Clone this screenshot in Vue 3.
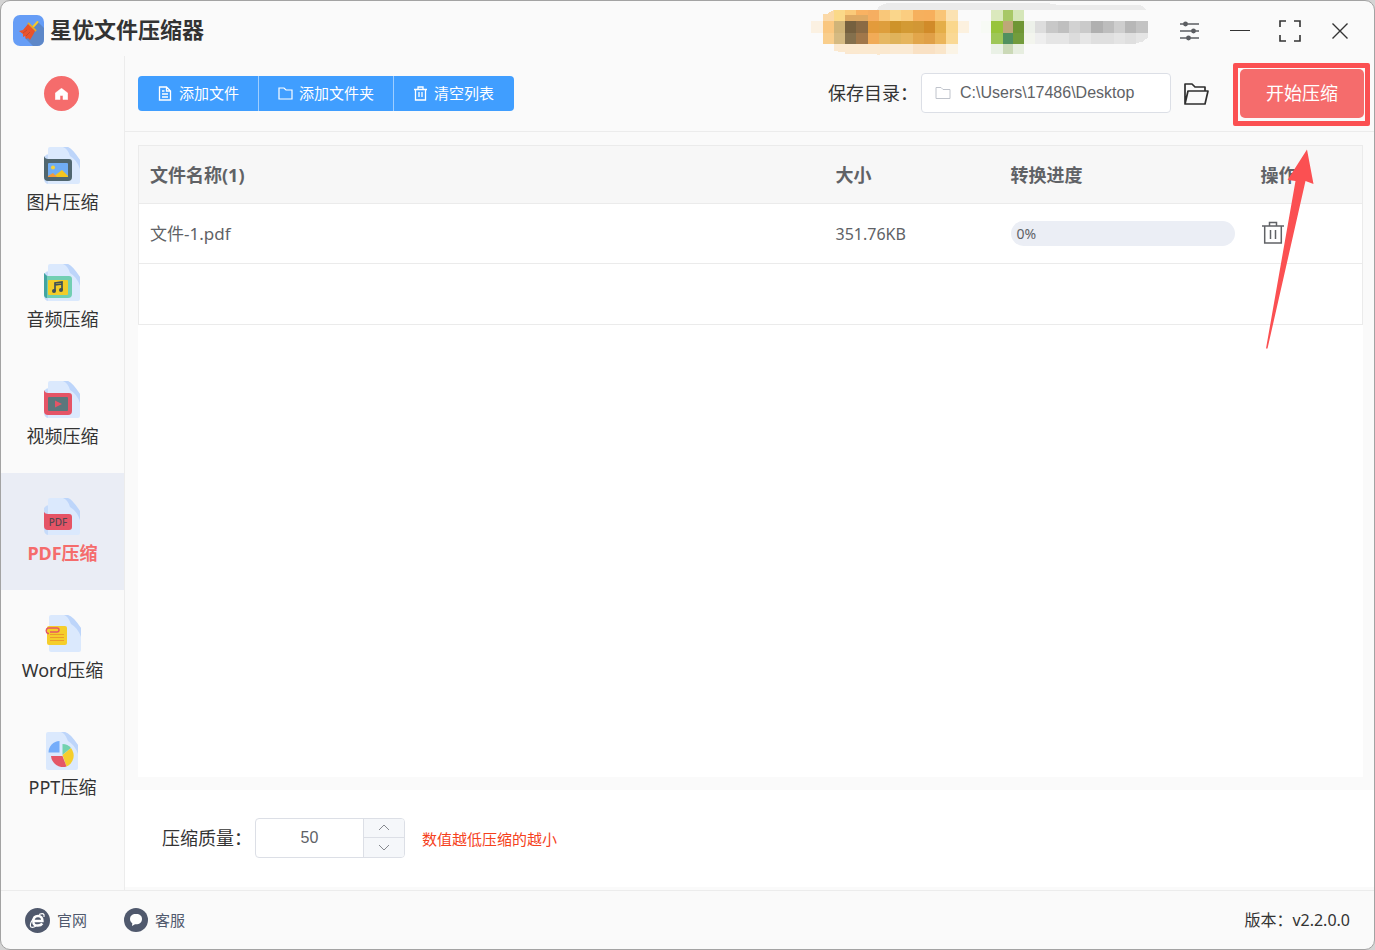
<script setup>
import { ref } from 'vue'

const items = [
  { id: 'image', label: '图片压缩' },
  { id: 'audio', label: '音频压缩' },
  { id: 'video', label: '视频压缩' },
  { id: 'pdf', label: 'PDF压缩' },
  { id: 'word', label: 'Word压缩' },
  { id: 'ppt', label: 'PPT压缩' },
]
const active = ref('pdf')
const path = ref('C:\\Users\\17486\\Desktop')
const quality = ref(50)
const files = ref([{ name: '文件-1.pdf', size: '351.76KB', progress: 0 }])

function step(n) {
  quality.value = Math.min(100, Math.max(1, Number(quality.value) + n))
}

// Rows of colour blocks: y, height, then [x, width, colour]
const blocks = [
  [30, 33, [[102, 33, '#fbd989'], [135, 34, '#fbca79'], [169, 34, '#f9b262'], [203, 34, '#f6ae61'], [237, 34, '#f9c779'], [271, 33, '#fad68b'], [304, 35, '#fbcd80'], [339, 33, '#f6b05d'], [372, 33, '#f7af5c'], [405, 33, '#f9c576'], [438, 36, '#fbe2b2'], [573, 36, '#dbe9bd'], [609, 30, '#a8c866'], [639, 33, '#d5e6b8']]],
  [63, 36, [[33, 36, '#fbf1e2'], [69, 33, '#fac77f'], [102, 33, '#d0b478'], [135, 34, '#75603f'], [169, 35, '#8a6a44'], [204, 33, '#e39b3b'], [237, 34, '#de9e3c'], [271, 33, '#ce932a'], [304, 35, '#d39a34'], [339, 33, '#d29735'], [372, 33, '#d18b29'], [405, 33, '#e4ae48'], [438, 36, '#fad78c'], [474, 33, '#fcf1df'], [543, 30, '#f7faf5'], [573, 36, '#98c43c'], [609, 30, '#bea778'], [639, 33, '#6f9634'], [672, 33, '#edf1ea'], [705, 33, '#dddddd'], [738, 36, '#c8c8c8'], [774, 33, '#bfbfbf'], [807, 33, '#d2d2d2'], [840, 33, '#cacaca'], [873, 36, '#b0b0b0'], [909, 33, '#bdbdbd'], [942, 33, '#cecece'], [975, 33, '#b7b7b7'], [1008, 36, '#c3c3c3']]],
  [99, 33, [[69, 33, '#f9ce8c'], [102, 33, '#d5ba82'], [135, 34, '#84704d'], [169, 35, '#a1774a'], [204, 33, '#f1ab57'], [237, 34, '#e6b762'], [271, 33, '#dfb35b'], [304, 35, '#e6b55d'], [339, 33, '#e2a64b'], [372, 33, '#e0a047'], [405, 33, '#ebb55a'], [438, 36, '#fad995'], [573, 36, '#9ec757'], [609, 30, '#51905f'], [639, 33, '#739c3c'], [672, 33, '#f3f5ee'], [705, 33, '#eeeeee'], [738, 69, '#e5e5e5'], [807, 33, '#dcdcdc'], [840, 33, '#e6e6e6'], [873, 69, '#dfdfdf'], [942, 33, '#e4e4e4'], [975, 33, '#dfdfdf']]],
  [132, 30, [[135, 69, '#fbe7cf'], [204, 67, '#fae8cf'], [271, 68, '#faead4'], [339, 66, '#f9e1c4'], [405, 33, '#fae6ca'], [438, 36, '#fbf4e6'], [573, 36, '#eaf1e6'], [609, 30, '#cbd9b7'], [639, 33, '#e7eee0']]],
]
</script>

<template>
  <div class="window">
    <header class="titlebar">
      <svg class="logo" viewBox="0 0 31 31" aria-hidden="true">
        <rect width="31" height="31" rx="7" fill="#669df6" />
        <path d="M25 7 31 13V24Q31 31 24 31H20L12 23Z" fill="#5d87c8" />
        <path d="m19 13 5.500-6" stroke="#f7c928" stroke-width="2" stroke-linecap="round" />
        <path d="m15 8 8 8" stroke="#e6aa2a" stroke-width="2" />
        <path d="m15 9 7 7-2 4-3 5-2-2-2 1-1-3-2 1v-3l-4-3 4-1Z" fill="#e9532b" />
        <path d="m10 18 4-3m-1 6 4-4" stroke="#bf4931" />
      </svg>
      <h1>星优文件压缩器</h1>
      <svg class="account" viewBox="0 0 1080 180" shape-rendering="crispEdges" aria-hidden="true">
        <path d="M230 30Q240 10 270 9H740L770 14H1015Q1032 18 1038 30Z" fill="#ebebeb" />
        <path d="M69 42H83Q92 31 108 30V63H69Z" fill="#fbd9a8" />
        <g v-for="row in blocks" :key="row[0]">
          <rect v-for="c in row[2]" :key="c[0]" :x="c[0]" :y="row[0]" :width="c[1]" :height="row[1]" :fill="c[2]" />
        </g>
        <path d="M135 45H203V63H135Z" fill="#dfaa63" />
        <path d="M1008 99H1044V112L1028 125 1008 130Z" fill="#e5e5e5" />
        <path d="M102 132H240V164L150 159 102 153Z" fill="#fbe9d0" />
      </svg>
      <div class="controls">
        <button type="button" aria-label="设置">
          <svg width="20" height="20" viewBox="0 0 20 20" fill="none" stroke="#5b5d61" stroke-width="1.5">
            <path d="M0 3h19M0 10h19M0 17h19" />
            <g fill="#5b5d61" stroke="none"><circle cx="5.500" cy="3" r="2.400" /><circle cx="13.500" cy="10" r="2.400" /><circle cx="8.500" cy="17" r="2.400" /></g>
          </svg>
        </button>
        <button type="button" aria-label="最小化">
          <svg width="20" height="20" viewBox="0 0 20 20"><path d="M0 9.500h20" stroke="#333" stroke-width="1.2" /></svg>
        </button>
        <button type="button" aria-label="最大化">
          <svg width="22" height="22" viewBox="0 0 22 22" fill="none" stroke="#333" stroke-width="1.6"><path d="M1 7V1h6M15 1h6v6M21 15v6h-6M7 21H1v-6" /></svg>
        </button>
        <button type="button" aria-label="关闭">
          <svg width="16" height="16" viewBox="0 0 16 16" stroke="#333" stroke-width="1.4"><path d="m.5.5 15 15m0-15-15 15" /></svg>
        </button>
      </div>
    </header>

    <div class="body">
      <nav class="sidebar">
        <button type="button" class="home" aria-label="首页">
          <svg width="13" height="12" viewBox="0 0 13 12"><path d="M6.500.3 12.700 5V11.600H8V7.500H5V11.600H.3V5Z" fill="#fff" stroke="#fff" stroke-width=".5" stroke-linejoin="round" /></svg>
        </button>
        <button v-for="item in items" :key="item.id" type="button" class="item" :class="{ active: item.id === active }" @click="active = item.id">
          <svg width="38" height="38" viewBox="0 0 38 38" aria-hidden="true">
            <g v-if="item.id === 'ppt'">
              <path d="M4 0H21L34 13V36Q34 38 32 38H4Q2 38 2 36V2Q2 0 4 0Z" fill="#dbe9fd" />
              <path d="M17 0H21Q26 1 34 13V22Q31 13 24 9Q21 1 17 0Z" fill="#bdd5fa" />
              <path d="M15.500 9V20.500H4.500A11.500 11.500 0 0 1 15.500 9Z" fill="#75adfa" />
              <path d="M18.500 12A11 11 0 0 1 27 16L18.500 23Z" fill="#72d2af" />
              <path d="m27 16-8.500 7 4 11.500A12 12 0 0 0 27 16Z" fill="#f5ce2c" />
              <path d="M7 24H18.500l4 10.500A12 12 0 0 1 7 24Z" fill="#e45767" />
            </g>
            <g v-else-if="item.id === 'word'">
              <path d="M7 0H24L37 13V35Q37 37 35 37H7Q5 37 5 35V2Q5 0 7 0Z" fill="#dbe9fd" />
              <path d="M20 0H24Q29 1 37 13V22Q34 13 27 9Q24 1 20 0Z" fill="#bdd5fa" />
              <rect x="3" y="11" width="20" height="19" rx="2" fill="#f5ce2c" />
              <path d="M6 19.500H20M6 22.500H20M6 25.500H20" stroke="#ec9b2c" />
              <path d="M5 18.500H4A3 3 0 0 1 4 13H13A2 2 0 0 1 13 17H6" fill="none" stroke="#e45767" stroke-width="1.400" />
            </g>
            <g v-else>
              <path d="M0 10Q2 7 5 7V37Q0 37 0 31Z" fill="#c6dbfa" />
              <path d="M6 0H24L36 13V35Q36 37 34 37H4V2Q4 0 6 0Z" fill="#dbe9fd" />
              <path d="M19 0H24Q28 1 36 13V22Q33 13 26 9Q24 2 19 0Z" fill="#bdd5fa" />
            </g>
            <g v-if="item.id === 'image'">
              <path d="M0 9Q1 12 4 12H25Q28 12 28 15V30Q28 34 24 34H4Q0 34 0 30Z" fill="#50666f" />
              <rect x="4" y="16" width="20" height="14" rx="1" fill="#70adf5" />
              <circle cx="9" cy="20.500" r="2" fill="#f6d23b" />
              <path d="m9 30 9-7 6 6v1Z" fill="#f5c51f" /><path d="m4 29 5-3 4 4H4Z" fill="#f29b3d" />
            </g>
            <g v-else-if="item.id === 'audio'">
              <path d="M0 9Q1 12 4 12H25Q28 12 28 15V30Q28 34 24 34H4Q0 34 0 30Z" fill="#72cfb2" />
              <path d="M0 9 3 12V34Q0 34 0 30Z" fill="#43a4a1" />
              <rect x="4" y="16" width="20" height="15" rx="1" fill="#f3cc29" />
              <path d="M11 27V19L18 18V26M11 21 18 20" fill="none" stroke="#3e5058" stroke-width="1.700" />
              <circle cx="10" cy="27" r="2" fill="#3e5058" /><circle cx="17" cy="26" r="2" fill="#3e5058" />
            </g>
            <g v-else-if="item.id === 'video'">
              <path d="M0 9Q1 12 4 12H25Q28 12 28 15V30Q28 34 24 34H4Q0 34 0 30Z" fill="#e55466" />
              <rect x="4" y="16" width="20" height="14" rx="1" fill="#5b777c" />
              <path d="m11 19.500 7 3.500-7 3.500Z" fill="#e55466" />
            </g>
            <g v-else-if="item.id === 'pdf'">
              <path d="M0 14Q1 16 4 16H25Q28 16 28 19V29Q28 32 25 32H4Q0 32 0 28Z" fill="#e55466" />
              <text x="14" y="28" text-anchor="middle" font-size="10" font-weight="500" fill="#56454f">PDF</text>
            </g>
          </svg>
          <span>{{ item.label }}</span>
        </button>
      </nav>

      <main class="main">
        <section class="toolbar">
          <div class="group">
            <button type="button">
              <svg width="15" height="15" viewBox="0 0 15 15" fill="none" stroke="#fff" stroke-width="1.300"><path d="M1.500 1h7l4 4v9h-11zM8.500 1v4h4M4 5h2.500M4 8h6M4 11h6" /></svg>
              添加文件
            </button>
            <button type="button">
              <svg width="15" height="15" viewBox="0 0 15 15" fill="none" stroke="#fff" stroke-width="1.200"><path d="M1 2h5l2 2h6v9H1z" /></svg>
              添加文件夹
            </button>
            <button type="button" @click="files = []">
              <svg width="15" height="15" viewBox="0 0 15 15" fill="none" stroke="#fff" stroke-width="1.300"><path d="M1 3.500h13M5 3V1h5v2M2.500 4v10h10V4M6 6v5M9 6v5" /></svg>
              清空列表
            </button>
          </div>
          <label class="dir-label" for="dir">保存目录：</label>
          <div class="dir">
            <svg width="16" height="14" viewBox="0 0 16 14" fill="none" stroke="#c0c4cc"><path d="M1 1.500h5l2 2h7v9H1z" /></svg>
            <input id="dir" v-model="path" type="text">
          </div>
          <button type="button" class="open" aria-label="打开目录">
            <svg width="26" height="22" viewBox="0 0 26 22" fill="none" stroke="#2e2e2e" stroke-width="1.700" stroke-linejoin="round"><path d="M2 21V1H9L12 4H22V8M2 21 5 8H25L22 21Z" /></svg>
          </button>
          <div class="start-wrap">
            <button type="button" class="start">开始压缩</button>
            <span class="frame"></span>
            <svg class="arrow" width="50" height="201" viewBox="0 0 50 201" aria-hidden="true"><path d="M42 1.500 48.500 36 40.500 33 2.500 200.500H1L30.500 33 22.500 32Z" fill="#fb5052" /></svg>
          </div>
        </section>

        <section class="list">
          <table>
            <colgroup><col><col class="c-size"><col class="c-progress"><col class="c-action"></colgroup>
            <thead>
              <tr><th>文件名称({{ files.length }})</th><th>大小</th><th>转换进度</th><th>操作</th></tr>
            </thead>
            <tbody>
              <tr v-for="(f, i) in files" :key="f.name">
                <td class="name">{{ f.name }}</td>
                <td class="size">{{ f.size }}</td>
                <td><div class="progress" role="progressbar" :aria-valuenow="f.progress" aria-label="转换进度">{{ f.progress }}%</div></td>
                <td>
                  <button type="button" class="delete" aria-label="删除" @click="files.splice(i, 1)">
                    <svg width="22" height="23" viewBox="0 0 22 23" fill="none" stroke="#606266" stroke-width="1.500"><path d="M0 5h22M7.500 5V1.500h7V5M2.700 5v17h16.600V5M8.500 9v9M13.500 9v9" /></svg>
                  </button>
                </td>
              </tr>
              <tr class="blank"><td colspan="4"></td></tr>
            </tbody>
          </table>
        </section>

        <section class="options">
          <label for="quality">压缩质量：</label>
          <div class="number">
            <input id="quality" v-model="quality" type="text" inputmode="numeric">
            <div class="steps">
              <button type="button" aria-label="增加" @click="step(1)"><svg width="12" height="7" viewBox="0 0 12 7"><path d="m1 6 5-5 5 5" /></svg></button>
              <button type="button" aria-label="减少" @click="step(-1)"><svg width="12" height="7" viewBox="0 0 12 7"><path d="m1 1 5 5 5-5" /></svg></button>
            </div>
          </div>
          <span class="hint">数值越低压缩的越小</span>
        </section>
      </main>
    </div>

    <footer class="footer">
      <a href="#site">
        <svg width="25" height="25" viewBox="0 0 25 25" fill="none"><circle cx="12.500" cy="12.500" r="12.500" fill="#50596d" /><path d="M8.500 13H17.500Q17.500 8 13 8T8.300 13 13 17.500Q16 17.500 17.300 15.500" stroke="#fff" stroke-width="2.400" /><path d="M14 6.500Q20 4 19 9M8 11Q4 17 6 19Q8 20 11 18" stroke="#fff" stroke-width="1.200" /></svg>
        官网
      </a>
      <a href="#service">
        <svg width="24" height="24" viewBox="0 0 24 24"><circle cx="12" cy="12" r="12" fill="#50596d" /><path d="M12 6C8 6 6 8 6 11C6 13 7 14.500 8.300 15.300L8 18L11 16.300C16 16.500 18 14 18 11C18 8 16 6 12 6Z" fill="#fff" /></svg>
        客服
      </a>
      <span class="version">版本：v2.2.0.0</span>
    </footer>
  </div>
</template>

<style>
body {
  margin: 0;
  background: #d4d4d4;
}
</style>

<style scoped>
* {
  box-sizing: border-box;
}
.window {
  display: flex;
  flex-direction: column;
  min-height: 100vh;
  border: 1px solid #a3a3a3;
  border-radius: 10px;
  overflow: hidden;
  background: #fafafa;
  color: #333;
  font-family: "Noto Sans", "Noto Sans CJK SC", sans-serif;
  font-size: 18px;
  font-weight: 400;
  line-height: 24px;
}
button,
input {
  font: inherit;
  color: inherit;
  margin: 0;
  padding: 0;
  border: 0;
  background: none;
}
button {
  cursor: pointer;
}
svg {
  display: block;
  flex: none;
}
.titlebar {
  display: flex;
  align-items: center;
  height: 55px;
  padding: 0 9px 0 12px;
}
.logo {
  width: 31px;
  height: 31px;
  margin-top: 4px;
}
h1 {
  margin: 0 0 0 6px;
  font-size: 22px;
  font-weight: 700;
  line-height: 30px;
}
.account {
  width: 360px;
  height: 60px;
  margin-left: auto;
  margin-right: 5px;
  margin-top: 2px;
}
.controls {
  display: flex;
  padding-top: 4px;
}
.controls button {
  display: grid;
  place-items: center;
  width: 50px;
  height: 40px;
}
.body {
  display: flex;
  flex: 1;
}
.sidebar {
  width: 124px;
  border-right: 1px solid #ececec;
}
.home {
  display: grid;
  place-items: center;
  width: 35px;
  height: 35px;
  margin: 20px auto 11px 43px;
  border-radius: 50%;
  background: #f56c6c;
}
.item {
  display: flex;
  flex-direction: column;
  align-items: center;
  gap: 5px;
  width: 100%;
  height: 117px;
  padding-top: 25px;
}
.item.active {
  background: #eaedf5;
  color: #f56c6c;
  font-weight: 700;
}
.main {
  display: flex;
  flex: 1;
  flex-direction: column;
  min-width: 0;
}
.toolbar {
  display: flex;
  align-items: center;
  height: 76px;
  padding: 0 10px 1px 13px;
  border-bottom: 1px solid #ececec;
}
.group {
  display: flex;
  margin-right: auto;
  border-radius: 4px;
  overflow: hidden;
}
.group button {
  display: flex;
  align-items: center;
  gap: 6px;
  height: 35px;
  padding: 0 19px 0 20px;
  background: #409eff;
  color: #fff;
  font-size: 15px;
}
.group button + button {
  padding-left: 19px;
  border-left: 1px solid #9fceff;
}
.group button:last-child {
  padding-right: 20px;
}
.dir-label {
  margin-right: 3px;
}
.dir {
  display: flex;
  align-items: center;
  gap: 9px;
  width: 250px;
  height: 40px;
  padding: 0 13px;
  border: 1px solid #dcdfe6;
  border-radius: 4px;
  background: #fff;
}
.dir input {
  flex: 1;
  min-width: 0;
  color: #606266;
  font-family: "Liberation Sans", sans-serif;
  font-size: 16px;
}
.open {
  margin: 2px 31px 0 12px;
}
.start-wrap {
  position: relative;
}
.start {
  display: block;
  width: 124px;
  height: 49px;
  border-radius: 5px;
  background: #f56c6c;
  color: #fff;
}
.frame {
  position: absolute;
  inset: -6px -6px -8px -7px;
  border: 5px solid #fb5052;
  border-radius: 2px;
  pointer-events: none;
}
.arrow {
  position: absolute;
  top: 79px;
  left: 25px;
  pointer-events: none;
}
.list {
  flex: 1;
  min-height: 632px;
  margin: 13px 11px 13px 13px;
  background: #fff;
}
table {
  width: 100%;
  table-layout: fixed;
  border: 1px solid #ebebeb;
  border-collapse: collapse;
  color: #606266;
}
.c-size {
  width: 175px;
}
.c-progress {
  width: 250px;
}
.c-action {
  width: 114px;
}
tr {
  height: 60px;
  border-bottom: 1px solid #ebebeb;
}
thead tr {
  height: 58px;
  background: #f7f7f7;
}
.blank {
  height: 61px;
}
th,
td {
  padding: 0 12px;
  text-align: left;
}
th {
  font-weight: 700;
}
th:first-child,
.name {
  padding-left: 11px;
}
.name {
  font-size: 17px;
}
.size {
  font-size: 16px;
}
.progress {
  width: 224px;
  height: 25px;
  padding-left: 6px;
  border-radius: 13px;
  background: #ebeef5;
  font-size: 14px;
  line-height: 25px;
}
.delete {
  display: block;
  padding: 0 0 2px 1px;
}
.options {
  display: flex;
  align-items: center;
  height: 97px;
  margin-bottom: 3px;
  padding: 0 0 2px 37px;
  background: #fff;
}
.number {
  display: flex;
  width: 150px;
  height: 40px;
  margin: 0 17px 0 3px;
  border: 1px solid #dcdfe6;
  border-radius: 4px;
  overflow: hidden;
}
.number input {
  flex: 1;
  min-width: 0;
  color: #606266;
  font-family: "Liberation Sans", sans-serif;
  font-size: 16px;
  text-align: center;
}
.steps {
  display: flex;
  flex-direction: column;
  width: 41px;
  border-left: 1px solid #dcdfe6;
}
.steps button {
  display: grid;
  flex: 1;
  place-items: center;
  background: #f5f7fa;
}
.steps button + button {
  border-top: 1px solid #dcdfe6;
}
.steps path {
  fill: none;
  stroke: #85888e;
}
.hint {
  padding-top: 2px;
  color: #f5411c;
  font-size: 15px;
}
.footer {
  display: flex;
  align-items: center;
  height: 59px;
  padding: 0 24px;
  border-top: 1px solid #ececec;
}
.footer a {
  display: flex;
  align-items: center;
  gap: 7px;
  margin-right: 37px;
  color: #50596d;
  font-size: 15px;
  text-decoration: none;
}
.version {
  margin-left: auto;
  font-size: 16px;
}
</style>
